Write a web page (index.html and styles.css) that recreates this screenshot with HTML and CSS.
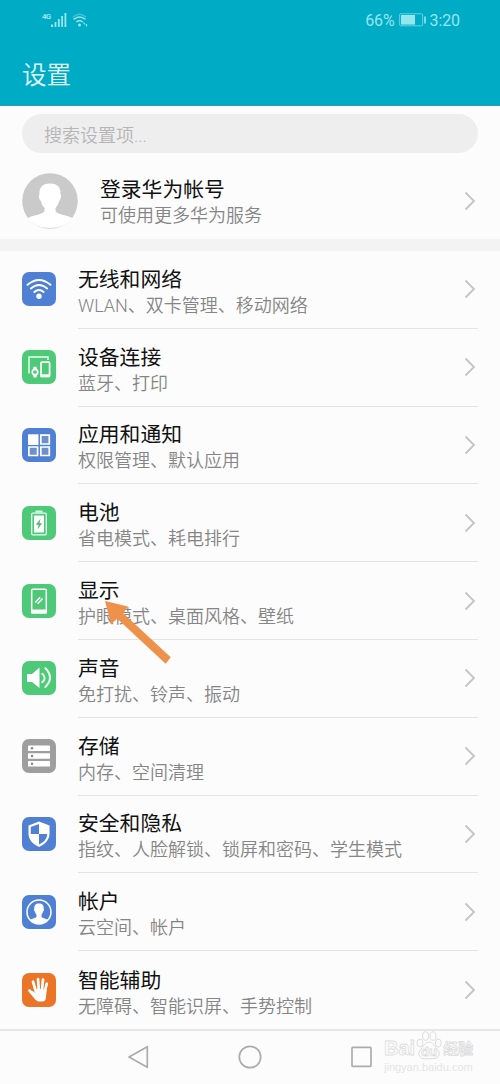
FILE: index.html
```html
<!DOCTYPE html>
<html lang="zh-CN">
<head>
<meta charset="utf-8">
<title>设置</title>
<link rel="stylesheet" href="styles.css">
</head>
<body>
<div class="screen">
  <header class="header">
    <div class="status">
      <div class="status-left">
        <span class="net">4G</span>
        <svg class="signal" width="16" height="15" viewBox="0 0 16 15" fill="currentColor"><path d="M0 11.500h2V14H0zM3.600 9h1.800v5H3.600zM6.900 6h1.800v8H6.900zM10.200 3H12v11h-1.800zM13.500 0h1.800v14h-1.800z"/></svg>
        <svg class="wifi" width="17" height="15" viewBox="0 0 17 15" fill="none" stroke="currentColor" stroke-width="1.500"><path d="M.8 4.200Q7.500-1.600 14.200 4.200" opacity=".4"/><path d="M1.600 6.300Q7.500 1.500 13.400 6.300M4.300 9Q7.500 6.400 10.700 9"/><circle cx="7.500" cy="12" r="1.500" fill="currentColor" stroke="none"/><path d="M11.500 9.500l1.500 2M14.500 11v2.500" stroke-width="1.200"/></svg>
      </div>
      <div class="status-right">
        <span>66%</span>
        <svg width="28" height="14" viewBox="0 0 28 14" fill="none" stroke="currentColor"><rect x=".6" y=".8" width="23" height="12" rx="1" opacity=".65"/><path d="M2 2h14v9.600H2z" fill="currentColor" stroke="none"/><path d="M26 3.500v7" stroke-width="1.600"/></svg>
        <span>3:20</span>
      </div>
    </div>
    <h1 class="heading">设置</h1>
  </header>
  <div class="search">搜索设置项...</div>
  <section class="account">
    <svg class="avatar" width="56" height="56" viewBox="0 0 56 56"><circle cx="28" cy="28" r="27.800" fill="#cacaca"/><path d="M28 10.500c-8 0-11 4.500-10.500 11-1.200 1-.5 5 1.300 6.300.8 3.500 2 5.500 3.700 7.200v3C21 41.500 10 42.500 5.500 45 11 52 19 55 28 55s17-3 22.500-10C46 42.500 35 41.500 33.500 38v-3c1.700-1.700 2.900-3.700 3.700-7.200 1.800-1.300 2.500-5.300 1.300-6.300.5-6.500-2.500-11-10.500-11z" fill="#fff"/></svg>
    <div class="text"><div class="title">登录华为帐号</div><div class="sub">可使用更多华为服务</div></div>
    <svg class="chevron" viewBox="0 0 12 20"><path d="M1.500 1.500L10 10l-8.500 8.500"/></svg>
  </section>
  <div class="band"></div>
  <main class="list">
    <div class="row">
      <svg class="icon" viewBox="0 0 34 34"><rect width="34" height="34" rx="7" fill="#5080d3"/><g fill="none" stroke="#fff" stroke-width="1.900" stroke-linecap="round"><path d="M5.500 12.800Q17 3 28.500 12.800M8.800 16.500Q17 9.400 25.200 16.500M12.300 20Q17 15.900 21.700 20"/></g><circle cx="17" cy="24.200" r="2.700" fill="#fff"/></svg>
      <div class="body"><div class="text"><div class="title">无线和网络</div><div class="sub">WLAN、双卡管理、移动网络</div></div><svg class="chevron" viewBox="0 0 12 20"><path d="M1.500 1.500L10 10l-8.500 8.500"/></svg></div>
    </div>
    <div class="row">
      <svg class="icon" viewBox="0 0 34 34"><rect width="34" height="34" rx="7" fill="#4ec977"/><path d="M7 23.500V7h19v3" fill="none" stroke="#e8ffef" stroke-width="1.500"/><rect x="19" y="12.200" width="8.600" height="14.200" rx="1" fill="none" stroke="#fff" stroke-width="1.700"/><path d="M18.500 24.300h9.500v2.900h-9.500z" fill="#fff"/><path d="M11.500 16.800h3l.5 2.700h-4zM11 24.500h4l-.5 3h-3z" fill="#fff"/><circle cx="13" cy="22" r="2.700" fill="none" stroke="#fff" stroke-width="1.700"/></svg>
      <div class="body"><div class="text"><div class="title">设备连接</div><div class="sub">蓝牙、打印</div></div><svg class="chevron" viewBox="0 0 12 20"><path d="M1.500 1.500L10 10l-8.500 8.500"/></svg></div>
    </div>
    <div class="row">
      <svg class="icon" viewBox="0 0 34 34"><rect width="34" height="34" rx="7" fill="#5080d3"/><path d="M6 6.300h10.500V17H6z" fill="#fff"/><g fill="#6e91cd" stroke="#fff" stroke-width="1.700"><path d="M18.800 7.200h8.500v8.800h-8.500zM6.900 19h8.700v8.500H6.900zM18.800 19h8.500v8.500h-8.500z"/></g></svg>
      <div class="body"><div class="text"><div class="title">应用和通知</div><div class="sub">权限管理、默认应用</div></div><svg class="chevron" viewBox="0 0 12 20"><path d="M1.500 1.500L10 10l-8.500 8.500"/></svg></div>
    </div>
    <div class="row">
      <svg class="icon" viewBox="0 0 34 34"><rect width="34" height="34" rx="7" fill="#4ec977"/><path d="M13.500 4.500h7v2h-7z" fill="#d8fbe4"/><rect x="9.700" y="7.200" width="14.600" height="21.600" rx="1" fill="none" stroke="#e8ffef" stroke-width="1.300"/><path d="M12 9.500h10v17H12z" fill="#fff"/><path d="M18.500 12.700l-4.600 6h2.700l-1 4.600 4.500-6h-2.600z" fill="#4eb774"/></svg>
      <div class="body"><div class="text"><div class="title">电池</div><div class="sub">省电模式、耗电排行</div></div><svg class="chevron" viewBox="0 0 12 20"><path d="M1.500 1.500L10 10l-8.500 8.500"/></svg></div>
    </div>
    <div class="row">
      <svg class="icon" viewBox="0 0 34 34"><rect width="34" height="34" rx="7" fill="#4ec977"/><rect x="9.700" y="5.200" width="14.600" height="23.600" rx="1" fill="none" stroke="#fff" stroke-width="1.500"/><path d="M9 25.500h16v4H9z" fill="#fff"/><path d="M13.200 18.500l5-5.200M15.600 19.800l5-5.200" stroke="#fff" stroke-width="1.500"/></svg>
      <div class="body"><div class="text"><div class="title">显示</div><div class="sub">护眼模式、桌面风格、壁纸</div></div><svg class="chevron" viewBox="0 0 12 20"><path d="M1.500 1.500L10 10l-8.500 8.500"/></svg></div>
      <svg class="pointer" width="68" height="64" viewBox="0 0 68 64"><path d="M1 0l23 5.500-5 6.500 47.700 44.300-5 6.500L13 17.500 7 23.500z" fill="#ee924b"/></svg>
    </div>
    <div class="row">
      <svg class="icon" viewBox="0 0 34 34"><rect width="34" height="34" rx="7" fill="#4ec977"/><path d="M5 13h5l7.500-6.500v20.500L10 21H5z" fill="#fff"/><path d="M20.300 12.700Q25 17 20.300 21.300M23.400 7.300Q32.600 16.500 23.400 26" fill="none" stroke="#e8ffef" stroke-width="2" stroke-linecap="round"/></svg>
      <div class="body"><div class="text"><div class="title">声音</div><div class="sub">免打扰、铃声、振动</div></div><svg class="chevron" viewBox="0 0 12 20"><path d="M1.500 1.500L10 10l-8.500 8.500"/></svg></div>
    </div>
    <div class="row">
      <svg class="icon" viewBox="0 0 34 34"><rect width="34" height="34" rx="7" fill="#9e9e9e"/><g fill="#fff"><rect x="6" y="6.500" width="22" height="5.600" rx=".6"/><rect x="6" y="14.200" width="22" height="5.600" rx=".6"/><rect x="6" y="21.900" width="22" height="5.600" rx=".6"/></g><g fill="#888"><circle cx="10" cy="9.300" r="1.300"/><circle cx="10" cy="17" r="1.300"/><circle cx="10" cy="24.700" r="1.300"/></g></svg>
      <div class="body"><div class="text"><div class="title">存储</div><div class="sub">内存、空间清理</div></div><svg class="chevron" viewBox="0 0 12 20"><path d="M1.500 1.500L10 10l-8.500 8.500"/></svg></div>
    </div>
    <div class="row">
      <svg class="icon" viewBox="0 0 34 34"><rect width="34" height="34" rx="7" fill="#5080d3"/><path d="M17 4.500l10.500 4v8c0 6-4 10.500-10.500 13.500C10.500 27 6.500 22.500 6.500 16.500v-8z" fill="#fff"/><path d="M17 7v10H8.800v-7zM17 17h8.200c-.2 5-3.200 8-8.200 10.500z" fill="#5080d3"/></svg>
      <div class="body"><div class="text"><div class="title">安全和隐私</div><div class="sub">指纹、人脸解锁、锁屏和密码、学生模式</div></div><svg class="chevron" viewBox="0 0 12 20"><path d="M1.500 1.500L10 10l-8.500 8.500"/></svg></div>
    </div>
    <div class="row">
      <svg class="icon" viewBox="0 0 34 34"><rect width="34" height="34" rx="7" fill="#5080d3"/><circle cx="17" cy="17" r="12" fill="none" stroke="#fff" stroke-width="1.500"/><path d="M17 8.500c-3.500 0-5 2-4.700 5.200-.6.500-.2 2.300.6 2.900.3 1.400.9 2.500 1.600 3.200v2c-.8 1.500-4 1.600-6.500 3 2.500 2.700 5.500 4 9 4s6.500-1.300 9-4c-2.500-1.400-5.700-1.500-6.500-3v-2c.7-.7 1.300-1.800 1.600-3.200.8-.6 1.200-2.400.6-2.900.3-3.200-1.200-5.200-4.700-5.200z" fill="#fff"/></svg>
      <div class="body"><div class="text"><div class="title">帐户</div><div class="sub">云空间、帐户</div></div><svg class="chevron" viewBox="0 0 12 20"><path d="M1.500 1.500L10 10l-8.500 8.500"/></svg></div>
    </div>
    <div class="row">
      <svg class="icon" viewBox="0 0 34 34"><rect width="34" height="34" rx="7" fill="#eb7426"/><path d="M13.700 18L11 8.700M16.800 17l-.8-11M20 17l1-10.500M22.700 19l2.100-8.300M14 25l-6.500-7.500" stroke="#fff" stroke-width="2.700" stroke-linecap="round"/><path d="M12.300 15.500L24.700 17l-.9 8.500c-.3 2-1.300 3-3.300 3h-3.300c-2 0-3-1-4.200-2.500L7.500 19l3-1 3 2z" fill="#fff"/></svg>
      <div class="body"><div class="text"><div class="title">智能辅助</div><div class="sub">无障碍、智能识屏、手势控制</div></div><svg class="chevron" viewBox="0 0 12 20"><path d="M1.500 1.500L10 10l-8.500 8.500"/></svg></div>
    </div>
  </main>
  <nav class="nav">
    <svg viewBox="0 0 24 24"><path d="M20.300 1.700v20.600L2 12z"/></svg>
    <svg viewBox="0 0 24 24"><circle cx="12" cy="12" r="10.700"/></svg>
    <svg viewBox="0 0 24 24"><rect x="2" y="2.400" width="19" height="19" rx=".8"/></svg>
    <div class="watermark">
      <div class="brand"><span>Bai</span><svg width="26" height="29" viewBox="0 0 26 29"><g fill="#fcfcfc" stroke="#dcdcdc"><ellipse cx="4" cy="12" rx="3" ry="4"/><ellipse cx="9.500" cy="5" rx="3" ry="4.200"/><ellipse cx="17" cy="5" rx="3" ry="4.200"/><ellipse cx="22.300" cy="12" rx="3" ry="4"/><path d="M13 11c-4 0-5 4-8 7-4 4-2 9 2 9.500 3 .3 9 .3 12 0 4-.5 6-5.500 2-9.500-3-3-4-7-8-7z"/></g><text x="13" y="25" text-anchor="middle" class="du">du</text></svg><span class="cn">经验</span></div>
      <div class="url">jingyan.baidu.com</div>
    </div>
  </nav>
</div>
</body>
</html>
```
FILE: styles.css
```css
* { box-sizing: border-box; }
body { margin: 0; font-family: Roboto, "Noto Sans CJK SC", sans-serif; background: #fcfcfc; }
svg { display: block; flex: none; }
.screen { width: 500px; height: 1084px; overflow: hidden; display: flex; flex-direction: column; background: #fcfcfc; }
.header { height: 106px; flex: none; background: #00abc5; border-bottom: 1px solid #2a9fb2; color: #e4fbff; }
.status { height: 40px; padding: 0 40px 0 42px; display: flex; align-items: center; justify-content: space-between; color: #96e6ee; font-size: 16px; }
.status-left { display: flex; align-items: flex-start; height: 15px; }
.net { font-size: 8px; line-height: 7px; width: 9px; font-weight: 700; letter-spacing: -.8px; }
.wifi { margin-left: 5px; }
.status-right { display: flex; align-items: center; gap: 4px; letter-spacing: -.1px; }
.status-right svg { margin-right: -1px; }
.heading { margin: 0; padding: 17px 22px 0; font-size: 24.500px; line-height: 38px; font-weight: 350; }
.search { flex: none; height: 39px; margin: 8px 22px 0; border-radius: 20px; background: #eee; color: #b5b5b5; padding: 2px 0 0 22px; font-size: 18px; line-height: 39px; font-weight: 350; }
.account { flex: none; height: 86px; display: flex; align-items: center; padding: 9px 24px 0 22px; }
.account .text { margin-left: 22px; padding-top: 3px; }
.text { flex: 1; padding-top: 5px; }
.title { font-size: 20.800px; line-height: 28px; color: #111; white-space: nowrap; }
.sub { font-size: 18px; line-height: 24px; color: #858585; font-weight: 350; white-space: nowrap; }
.chevron { width: 12px; height: 20px; fill: none; stroke: #c4c4c4; stroke-width: 1.800; }
.band { flex: none; height: 12px; background: #f3f3f3; }
.list { flex: none; display: grid; grid-auto-rows: 77.800px; }
.row { position: relative; display: flex; align-items: center; padding: 0 22px; gap: 22px; }
.icon { width: 34px; height: 34px; margin-bottom: 1px; }
.body { flex: 1; height: 100%; display: flex; align-items: center; padding-right: 2px; border-bottom: 1px solid #e4e4e4; }
.row:last-child .body { border-bottom: 0; }
.pointer { position: absolute; left: 104px; top: 39px; }
.nav { position: relative; flex: 1; border-top: 2px solid #e6e6e6; display: flex; justify-content: center; gap: 87.500px; padding-top: 14px; }
.nav > svg { width: 24px; height: 24px; fill: none; stroke: #acacac; stroke-width: 1.700; stroke-linejoin: round; }
.watermark { position: absolute; left: 384px; top: 0; width: 94px; color: #fcfcfc; font-family: "Liberation Sans", "Noto Sans CJK SC", sans-serif; }
.brand { display: flex; align-items: flex-end; height: 29px; font-size: 20px; line-height: 23px; font-weight: 700; -webkit-text-stroke: .8px #dcdcdc; }
.brand svg { margin-left: 1px; }
.du { font-size: 13px; font-weight: 700; fill: #fcfcfc; stroke: #dcdcdc; stroke-width: .8px; }
.cn { font-size: 15px; margin-left: 1px; line-height: 22px; }
.url { font-size: 11px; line-height: 14px; color: #e4e4e4; white-space: nowrap; }
```
